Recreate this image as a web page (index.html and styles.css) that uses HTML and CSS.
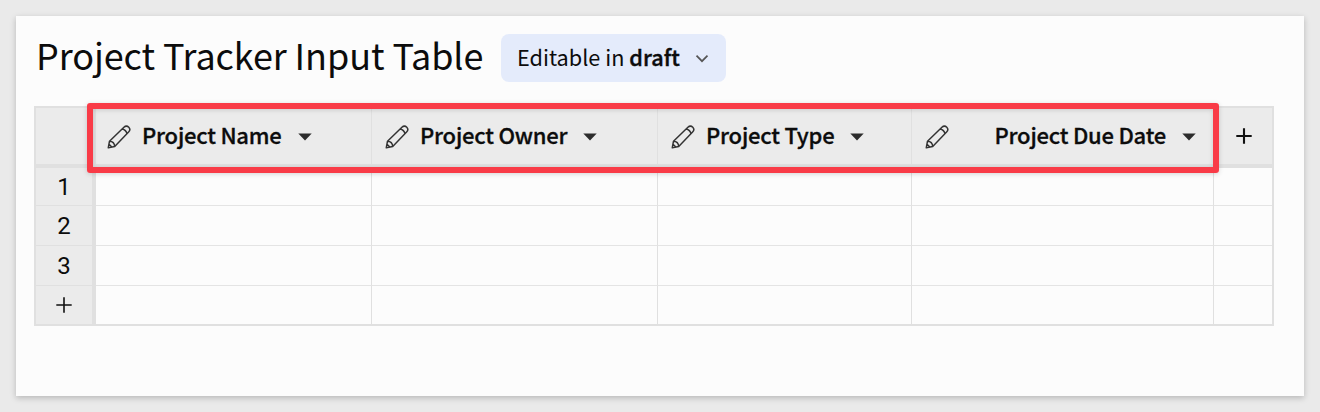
FILE: index.html
```html
<!DOCTYPE html>
<html lang="en">
<head>
<meta charset="utf-8">
<title>Project Tracker Input Table</title>
<link rel="stylesheet" href="styles.css">
</head>
<body>
<svg class="defs" width="0" height="0">
  <symbol id="pencil" viewBox="0 0 24 24">
    <path d="M1.3 22.7 2.5 16.2 16.9 2.3C18.4.9 20.4.9 21.8 2.2 23.1 3.6 23.1 5.5 21.6 7L7.7 21.4Z M2.5 16.2C5.5 16.3 7.5 18.5 7.7 21.4 M15.2 4C17.5 4.5 19.4 6.3 19.9 8.7 M1.3 22.7 2 19.3 4.6 21.9Z"/>
  </symbol>
  <symbol id="caret" viewBox="0 0 14 8"><path d="M.3.4H13.7L7 7.4Z"/></symbol>
</svg>
<main class="card">
  <header class="heading">
    <h1 class="title">Project Tracker Input Table</h1>
    <button class="mode"><span class="mode-text">Editable in <b>draft</b></span>
      <svg class="chevron" width="14" height="10" viewBox="0 0 14 10"><path d="M1.5 1.7 7 7.2 12.5 1.7"/></svg>
    </button>
  </header>
  <section class="grid">
    <div class="corner"></div>
    <div class="head head-first"><svg class="pencil"><use href="#pencil"/></svg><span class="name">Project Name</span><svg class="caret"><use href="#caret"/></svg></div>
    <div class="head"><svg class="pencil"><use href="#pencil"/></svg><span class="name">Project Owner</span><svg class="caret"><use href="#caret"/></svg></div>
    <div class="head"><svg class="pencil"><use href="#pencil"/></svg><span class="name">Project Type</span><svg class="caret"><use href="#caret"/></svg></div>
    <div class="head head-end"><svg class="pencil"><use href="#pencil"/></svg><span class="name">Project Due Date</span><svg class="caret"><use href="#caret"/></svg></div>
    <div class="head head-add"><svg class="plus" width="16" height="16" viewBox="0 0 16 16"><path d="M8 .3V15.7M.3 8H15.7"/></svg></div>
    <div class="num">1</div><div class="cell"></div><div class="cell"></div><div class="cell"></div><div class="cell"></div><div class="cell last"></div>
    <div class="num">2</div><div class="cell"></div><div class="cell"></div><div class="cell"></div><div class="cell"></div><div class="cell last"></div>
    <div class="num">3</div><div class="cell"></div><div class="cell"></div><div class="cell"></div><div class="cell"></div><div class="cell last"></div>
    <div class="num foot"><svg class="plus thin" width="16" height="16" viewBox="0 0 16 16"><path d="M8 .3V15.7M.3 8H15.7"/></svg></div><div class="cell foot"></div><div class="cell foot"></div><div class="cell foot"></div><div class="cell foot"></div><div class="cell last foot"></div>
    <div class="highlight"></div>
  </section>
</main>
</body>
</html>
```
FILE: styles.css
```css
* { box-sizing: border-box; }
body {
  margin: 0;
  padding: 16px;
  height: 412px;
  overflow: hidden;
  background: #eaeaea;
  color: #0c0c0c;
  font-family: "Noto Sans CJK SC", "Noto Sans", sans-serif;
}
.defs { position: absolute; }
.card {
  height: 380px;
  padding: 18px 30px 0 18px;
  background: #fcfcfc;
  box-shadow: 0 2px 6px rgba(0, 0, 0, .22);
}
.heading { display: flex; align-items: center; height: 48px; margin-bottom: 24px; }
.title {
  width: 467px;
  margin: 0;
  padding: 0 0 8px 2px;
  font-size: 36px;
  font-weight: 400;
  line-height: 40px;
  letter-spacing: -.09px;
  white-space: nowrap;
}
.mode {
  display: flex;
  align-items: center;
  justify-content: space-between;
  width: 225px;
  height: 48px;
  padding: 0 17px 0 16px;
  border: 0;
  border-radius: 8px;
  background: #e4ebfb;
  color: inherit;
  font: 400 21.7px/44px "Noto Sans CJK SC", sans-serif;
  white-space: nowrap;
}
.mode-text { padding-bottom: 3px; }
.mode b { font-weight: 500; -webkit-text-stroke: .4px #0c0c0c; }
.chevron { margin-top: 1px; }
.chevron path { fill: none; stroke: #555; stroke-width: 1.7; }
.grid {
  position: relative;
  display: grid;
  grid-template-columns: 60px 276px 286px 254px 302px 58px;
  grid-template-rows: 60px 38px 40px 40px 38px;
  width: 1240px;
  border: 2px solid #e0e0e0;
}
.corner, .head { background: #ebebeb; border-bottom: 4px solid #e0e0e0; }
.corner, .num { border-right: 4px solid #e0e0e0; }
.head {
  display: flex;
  align-items: center;
  padding-left: 13px;
  border-right: 1px solid #e0e0e0;
}
.head-first { padding-left: 11px; }
.head-end { padding-right: 17px; }
.head-end .name { margin-left: auto; }
.head-add { justify-content: center; padding: 0 0 0 2px; border-right: 0; }
.pencil { width: 24px; height: 24px; margin-top: 1px; fill: none; stroke: #333; stroke-width: 1.5; stroke-linejoin: round; }
.name {
  margin-left: 11px;
  padding-bottom: 4px;
  font-size: 22px;
  font-weight: 500;
  line-height: 32px;
  letter-spacing: -.22px;
  white-space: nowrap;
  -webkit-text-stroke: .3px #0c0c0c;
}
.caret { width: 14px; height: 8px; margin-left: 16px; margin-top: 1px; fill: #2c2c2c; }
.plus path { fill: none; stroke: #111; stroke-width: 2.1; }
.plus.thin path { stroke-width: 1.6; }
.num {
  display: flex;
  align-items: center;
  justify-content: center;
  background: #ebebeb;
  border-bottom: 1px solid #e0e0e0;
  font: 400 24px/36px Roboto, sans-serif;
}
.cell { border-right: 1px solid #e0e0e0; border-bottom: 1px solid #e4e4e4; }
.last { border-right: 0; }
.foot { border-bottom: 0; }
.highlight {
  position: absolute;
  left: 51px;
  top: -5px;
  width: 1132px;
  height: 69.5px;
  border: 6px solid #f93b47;
  border-radius: 3px;
  box-shadow: 0 1px 5px rgba(0, 0, 0, .16), inset 0 1px 5px rgba(0, 0, 0, .14);
}
```
